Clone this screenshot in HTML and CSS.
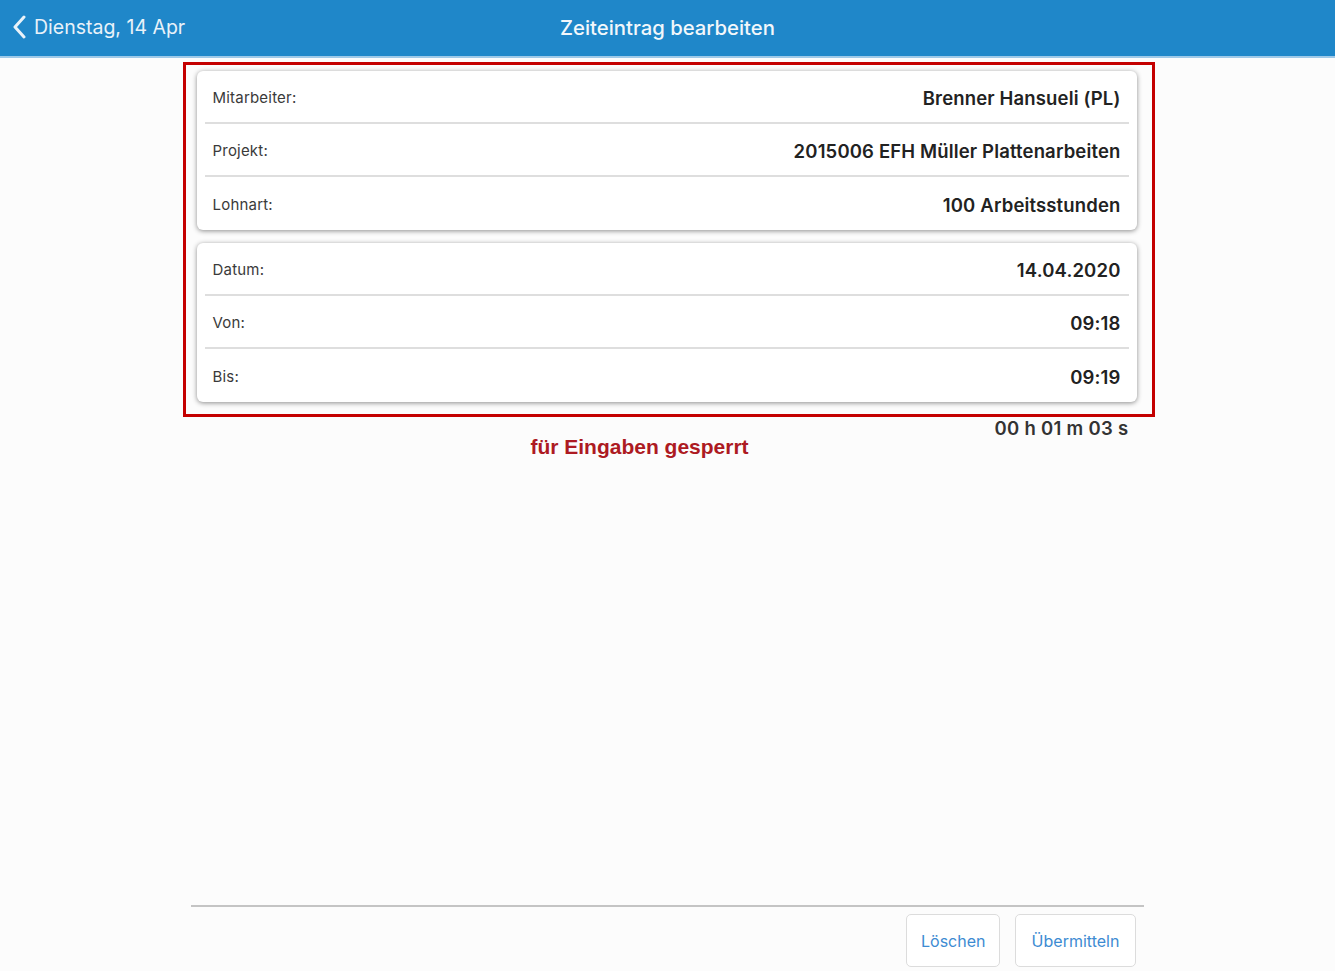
FILE: index.html
```html
<!DOCTYPE html>
<html lang="de">
<head>
<meta charset="utf-8">
<title>Zeiteintrag bearbeiten</title>
<link rel="stylesheet" href="styles.css">
</head>
<body>
<div class="app">
  <header class="navbar">
    <a class="back" href="#">
      <svg class="chev" width="16" height="24" viewBox="0 0 16 24"><path d="M12 2 L3 12 L12 22" fill="none" stroke="currentColor" stroke-width="3" stroke-linecap="round" stroke-linejoin="round"/></svg>
      <span>Dienstag, 14 Apr</span>
    </a>
    <h1 class="title">Zeiteintrag bearbeiten</h1>
  </header>

  <main class="content">
    <section class="locked">
      <div class="card">
        <div class="row"><span class="label">Mitarbeiter:</span><span class="value">Brenner Hansueli (PL)</span></div>
        <div class="row"><span class="label">Projekt:</span><span class="value">2015006 EFH Müller Plattenarbeiten</span></div>
        <div class="row"><span class="label">Lohnart:</span><span class="value">100 Arbeitsstunden</span></div>
      </div>
      <div class="card">
        <div class="row"><span class="label">Datum:</span><span class="value">14.04.2020</span></div>
        <div class="row"><span class="label">Von:</span><span class="value">09:18</span></div>
        <div class="row"><span class="label">Bis:</span><span class="value">09:19</span></div>
      </div>
    </section>
    <div class="duration">00 h 01 m 03 s</div>
    <p class="notice">für Eingaben gesperrt</p>
  </main>

  <footer class="actions">
    <button class="btn btn-delete">Löschen</button>
    <button class="btn btn-submit">Übermitteln</button>
  </footer>
</div>
</body>
</html>
```

FILE: styles.css
```css
* { box-sizing: border-box; }

html, body {
  margin: 0;
  padding: 0;
  background: #fcfcfc;
  font-family: Inter, "Open Sans", "Liberation Sans", sans-serif;
}

.app {
  height: 100vh;
  display: flex;
  flex-direction: column;
}

/* top navigation bar */
.navbar {
  position: relative;
  height: 58px;
  background: #1f87c9;
  border-bottom: 2px solid #9ec9e8;
  display: flex;
  align-items: center;
  justify-content: center;
  color: #f2f7fb;
}

.back {
  position: absolute;
  left: 12px;
  top: 14px;
  display: flex;
  align-items: center;
  gap: 6px;
  color: #e9f2f9;
  text-decoration: none;
  font-size: 19.5px;
  font-weight: 400;
  letter-spacing: 0;
}

.chev { display: block; margin-top: 1px; }

.title {
  margin: 0 0 2px 0;
  font-size: 20.3px;
  font-weight: 500;
  letter-spacing: 0;
}

/* main content */
.content {
  width: 972px;
  margin: 4px auto 0 auto;
  transform: translateX(1px);
}

.locked {
  border: 3px solid #c40000;
  padding: 6px 15px 12px 11px;
  display: flex;
  flex-direction: column;
  gap: 13px;
}

.card {
  background: #fff;
  border-radius: 6px;
  box-shadow: 0 1px 5px rgba(0, 0, 0, 0.45);
  padding: 0 8px;
}

.row {
  height: 53px;
  display: flex;
  align-items: center;
  justify-content: space-between;
  padding: 2px 8px 0 8px;
  border-bottom: 2px solid #dedede;
}

.row:last-child { border-bottom: none; }

.label {
  font-size: 15px;
  color: #3a3a3a;
  letter-spacing: 0.2px;
}

.value {
  font-size: 18.5px;
  font-weight: 600;
  color: #222;
  letter-spacing: 0.15px;
}

.duration {
  text-align: right;
  padding-right: 26px;
  margin-top: 0;
  font-size: 18.5px;
  font-weight: 600;
  color: #333;
  letter-spacing: 0.3px;
  line-height: 22px;
}

.notice {
  margin: -3px 0 0 0;
  text-align: center;
  padding-right: 58px;
  font-family: "Liberation Sans", Arial, sans-serif;
  font-weight: 700;
  font-size: 21px;
  color: #ad1a22;
  line-height: 22px;
}

/* bottom action bar */
.actions {
  margin: auto auto 0 auto;
  width: 953px;
  border-top: 2px solid #c4c4c4;
  padding: 7px 8px 4px 0;
  display: flex;
  justify-content: flex-end;
  gap: 15px;
}

.btn {
  height: 53px;
  padding: 0 14px;
  background: #fff;
  border: 1.5px solid #dcdcdc;
  border-radius: 5px;
  font-family: Inter, "Open Sans", sans-serif;
  font-size: 16px;
  color: #3d8bd2;
}

.btn-delete { width: 94px; }
.btn-submit { width: 121px; }
```
